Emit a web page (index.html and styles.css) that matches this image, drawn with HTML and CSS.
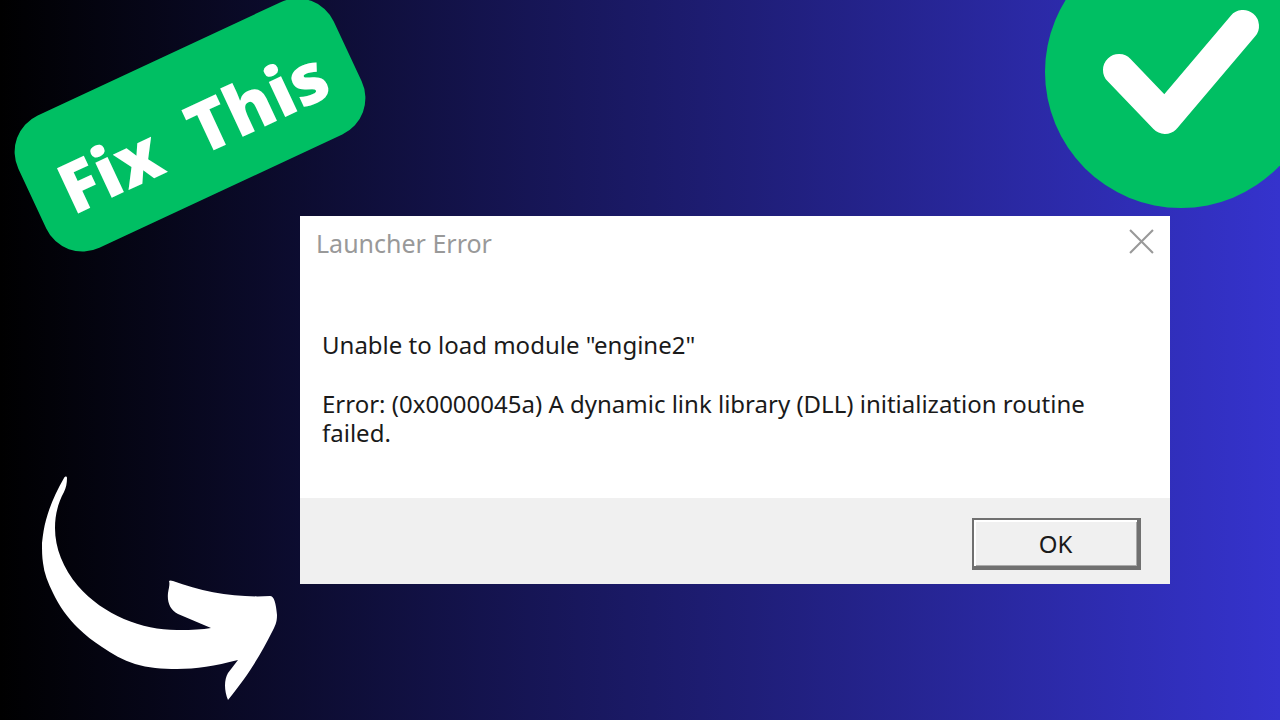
FILE: index.html
```html
<!DOCTYPE html>
<html lang="en">
<head>
    <meta charset="UTF-8">
    <meta name="viewport" content="width=device-width, initial-scale=1.0">
    <title>Launcher Error</title>
    <link rel="stylesheet" href="styles.css">
</head>
<body>

    <main class="stage">
        <div class="badge">Fix  This</div>

        <svg class="check" viewBox="0 0 272 272" aria-hidden="true">
            <circle cx="136" cy="136" r="136" fill="#00bf63"/>
            <path d="M74 134L120 182L198 90" fill="none" stroke="#fff" stroke-width="32" stroke-linecap="round" stroke-linejoin="round"/>
        </svg>

        <svg class="arrow" viewBox="0 0 240 228" aria-hidden="true">
            <path fill="#fff" d="M24 5C25 3 27 3 27 5C27 10 26 15 24 19C18 30 15 42 15 55C15 75 23 95 38 113C64 143 105 158 140 157Q158 157 171 155L138 141C130 137 127 129 128 120C129 114 130 111 129 108Q130 107 133 108C162 119 197 125 230 123C234 123 236 130 237 142C237 150 235 153 232 159C221 181 209 201 188 227C184 217 184 207 188 200L198 187C175 193 156 196 137 196C122 196 108 195 95 191C83 187 72 181 62 174C53 168 45 162 38 155C28 145 19 133 13 120C8 110 4 100 3 90C2 84 2 77 2 70C3 61 4 54 6 47C10 32 16 19 24 5Z"/>
        </svg>

        <section class="dialog" role="dialog" aria-labelledby="dialog-title">
            <header class="dialog-header">
                <h1 class="dialog-title" id="dialog-title">Launcher Error</h1>
                <button class="close-button" type="button" aria-label="Close">
                    <svg class="close-icon" viewBox="0 0 24 24" aria-hidden="true">
                        <path d="M1 1L23 23M23 1L1 23" fill="none" stroke="#999" stroke-width="2"/>
                    </svg>
                </button>
            </header>
            <div class="dialog-body">
                <p>Unable to load module "engine2"</p>
                <p>Error: (0x0000045a) A dynamic link library (DLL) initialization routine failed.</p>
            </div>
            <footer class="dialog-footer">
                <button class="ok-button" type="button">OK</button>
            </footer>
        </section>
    </main>

</body>
</html>
```
FILE: styles.css
```css
* {
    box-sizing: border-box;
}
body {
    margin: 0;
    font-family: "Noto Sans", "Open Sans", sans-serif;
    background-color: #000;
}
.stage {
    position: relative;
    min-height: 100vh;
    padding: 216px 110px 136px 300px;
    overflow: hidden;
    background: linear-gradient(90deg, #000 0%, #3533cd 100%);
}
.badge {
    position: absolute;
    top: 52px;
    left: 16px;
    width: 348px;
    height: 146px;
    padding-top: 14px;
    border-radius: 40px;
    background-color: #00bf63;
    color: #fff;
    font-family: "Open Sans", sans-serif;
    font-size: 70px;
    font-weight: 800;
    line-height: 130px;
    text-align: center;
    white-space: pre;
    transform: rotate(-25deg);
}
.check {
    position: absolute;
    top: -64px;
    right: -37px;
    width: 272px;
    height: 272px;
}
.arrow {
    position: absolute;
    top: 473px;
    left: 40px;
    width: 240px;
    height: 228px;
}
.dialog {
    background-color: #fff;
    color: #1a1a1a;
}
.dialog-header {
    display: flex;
    justify-content: space-between;
    align-items: center;
    height: 50px;
    padding: 0 16px;
}
.dialog-title {
    margin: 0;
    padding-top: 4px;
    color: #999;
    font-size: 25px;
    font-weight: 400;
    line-height: 28px;
}
.close-button {
    display: flex;
    padding: 0;
    border: none;
    background: none;
    cursor: pointer;
}
.close-icon {
    width: 25px;
    height: 25px;
}
.dialog-body {
    padding: 64px 22px 51px;
    font-size: 24px;
    line-height: 29px;
}
.dialog-body p {
    margin: 0 0 30px;
}
.dialog-body p:last-child {
    margin-bottom: 0;
}
.dialog-footer {
    display: flex;
    justify-content: flex-end;
    padding: 20px 29px 14px;
    background-color: #f0f0f0;
}
.ok-button {
    width: 169px;
    height: 52px;
    border: 2px solid #707070;
    border-right-width: 4px;
    border-bottom-width: 4px;
    background-color: #f0f0f0;
    box-shadow: inset 2px 2px 0 #fff, inset -1px -1px 0 #aaa;
    color: #1a1a1a;
    font-family: inherit;
    font-size: 24px;
    cursor: pointer;
}
```
